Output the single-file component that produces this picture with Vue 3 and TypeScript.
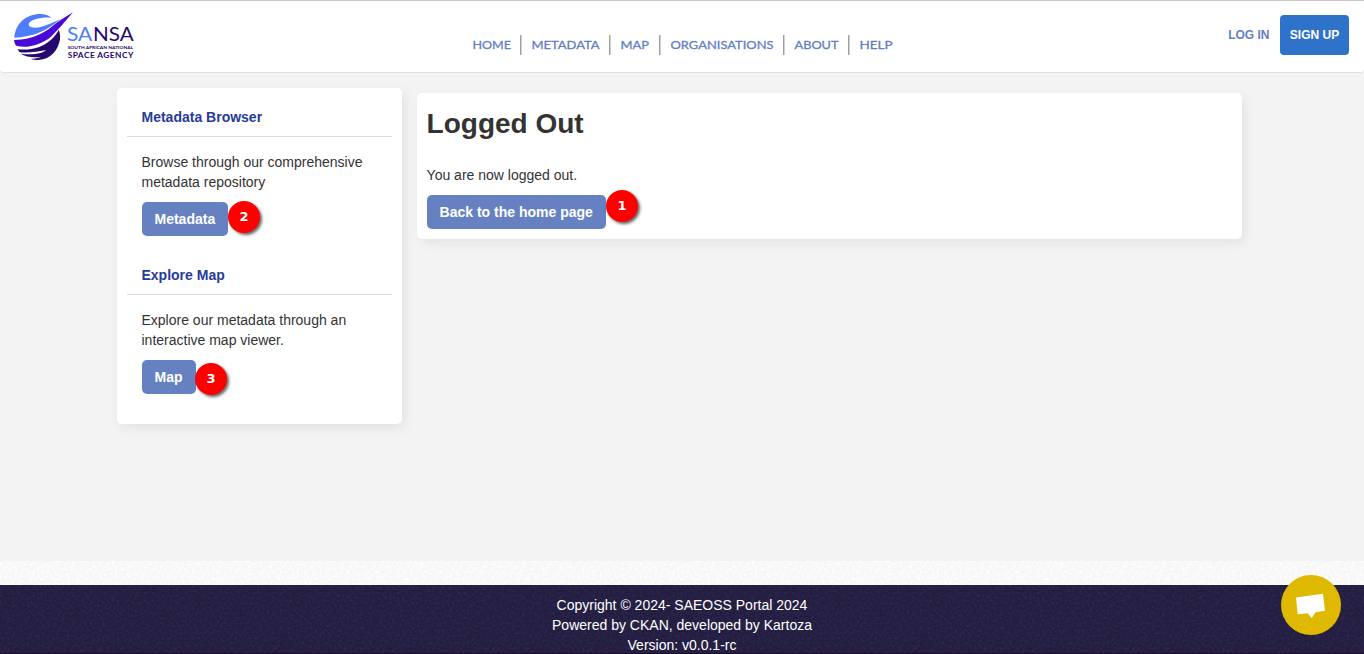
<script setup lang="ts">
interface NavItem { label: string; width: number }
interface Panel { title: string; lines: string[]; button: string; step: number }

const nav: NavItem[] = [
  { label: 'HOME', width: 38.5 },
  { label: 'METADATA', width: 68 },
  { label: 'MAP', width: 28.5 },
  { label: 'ORGANISATIONS', width: 103 },
  { label: 'ABOUT', width: 44 },
  { label: 'HELP', width: 33 },
]

const panels: Panel[] = [
  { title: 'Metadata Browser', lines: ['Browse through our comprehensive', 'metadata repository'], button: 'Metadata', step: 2 },
  { title: 'Explore Map', lines: ['Explore our metadata through an', 'interactive map viewer.'], button: 'Map', step: 3 },
]
</script>

<template>
  <div class="page">
    <header class="header">
      <svg class="logo" width="150" height="70" viewBox="0 0 450 210" aria-label="SANSA">
        <path fill="#4d7dfb" d="M43 110C46 68 78 39 121 39C134 39 146 43 154 50C126 47 92 55 87 67C82 80 103 83 125 77C145 72 166 61 181 54C151 81 112 107 43 110Z" />
        <path fill="#4a0ad6" d="M42 117C103 117 140 91 169 66C182 57 199 47 219 34C198 58 175 87 153 107C126 130 80 144 49 134C44 130 43 123 42 117Z" />
        <path fill="#26066f" d="M176 86C181 98 182 111 178 124C169 157 143 177 114 177C106 177 99 176 92 173C105 173 116 171 122 167C103 171 77 168 62 158C94 163 125 159 138 147C111 153 76 157 58 153L53 145C92 149 129 139 153 116C163 107 171 97 176 86Z" />
        <g font-family="Lato, sans-serif">
          <text x="201" y="120" font-size="56" fill="#4d7dfb" textLength="76" lengthAdjust="spacingAndGlyphs">SA</text>
          <text x="279" y="120" font-size="56" fill="#26066f" textLength="122" lengthAdjust="spacingAndGlyphs">NSA</text>
          <text x="203" y="143" font-size="13" font-weight="700" fill="#26066f" textLength="197" lengthAdjust="spacingAndGlyphs">SOUTH AFRICAN NATIONAL</text>
          <text x="203" y="170" font-size="25" font-weight="700" fill="#26066f" textLength="197" lengthAdjust="spacing">SPACE AGENCY</text>
        </g>
      </svg>
      <nav class="nav">
        <a v-for="item in nav" :key="item.label" class="nav-item">
          <svg :width="item.width" height="20" class="nav-label">
            <text x="0.5" y="14" :textLength="item.width" lengthAdjust="spacingAndGlyphs">{{ item.label }}</text>
          </svg>
        </a>
      </nav>
      <div class="account">
        <a class="login">LOG IN</a>
        <a class="signup">SIGN UP</a>
      </div>
    </header>

    <main class="content">
      <aside class="card sidebar">
        <section v-for="panel in panels" :key="panel.title" class="panel">
          <h2 class="panel-title">{{ panel.title }}</h2>
          <div class="panel-body">
            <p><span v-for="line in panel.lines" :key="line" class="line">{{ line }}</span></p>
            <a class="btn">{{ panel.button }}<span class="step" :class="'step-' + panel.step">{{ panel.step }}</span></a>
          </div>
        </section>
      </aside>
      <section class="card primary">
        <h1>Logged Out</h1>
        <p>You are now logged out.</p>
        <a class="btn">Back to the home page<span class="step step-1">1</span></a>
      </section>
    </main>

    <div class="strip">
      <svg class="grain" width="100%" height="100%">
        <filter id="grain-light" x="0" y="0" width="100%" height="100%">
          <feTurbulence type="fractalNoise" baseFrequency="0.4" numOctaves="2" seed="3" />
          <feColorMatrix values="0 0 0 0 1  0 0 0 0 1  0 0 0 0 1  3 0 0 0 -1.3" />
        </filter>
        <rect width="100%" height="100%" filter="url(#grain-light)" />
      </svg>
    </div>
    <footer class="footer">
      <svg class="grain" width="100%" height="100%">
        <filter id="grain-dark" x="0" y="0" width="100%" height="100%">
          <feTurbulence type="fractalNoise" baseFrequency="0.4" numOctaves="2" seed="7" />
          <feColorMatrix values="0 0 0 0 .35  0 0 0 0 .34  0 0 0 0 .48  .25 0 0 0 -.11" />
        </filter>
        <rect width="100%" height="100%" filter="url(#grain-dark)" />
      </svg>
      <div class="credits">
        <div>Copyright © 2024- SAEOSS Portal 2024</div>
        <div>Powered by CKAN, developed by Kartoza</div>
        <div>Version: v0.0.1-rc</div>
      </div>
    </footer>

    <button class="chat" aria-label="Chat">
      <svg width="60" height="60" viewBox="0 0 60 60">
        <path fill="#fff" d="M15 22.4L42 18.8L44 35.7L34.5 37.3L30.8 43L26.5 38.2L16.6 39.2Z" />
      </svg>
    </button>
  </div>
</template>

<style>
html, body { margin: 0; overflow: hidden; }
</style>

<style scoped>
* { box-sizing: border-box; }
.page {
  position: relative;
  display: flex;
  flex-direction: column;
  height: 654px;
  overflow: hidden;
  background: #f3f3f3;
  color: #333;
  font: 14px/20px "Liberation Sans", Arial, sans-serif;
}
.header {
  display: grid;
  grid-template-columns: 461.5px 1fr auto;
  height: 73px;
  flex: none;
  background: #fff;
  border-top: 1px solid #c8c8c8;
  border-bottom: 1px solid #dcdfe5;
  border-radius: 0 0 4px 4px;
}
.logo { display: block; }
.nav { display: flex; padding-top: 34px; }
.nav-item { display: flex; height: 20px; padding: 0 10px; border-right: 1px solid #a0a0a0; box-shadow: 1px 0 0 #d0d0d0; box-sizing: content-box; }
.nav-item:last-child { border: 0; box-shadow: none; }
.nav-label { display: block; overflow: visible; }
.nav-label text { font: 400 12px Lato, sans-serif; fill: #6480c3; stroke: #6480c3; stroke-width: .3px; }
.account { display: flex; align-items: flex-start; padding: 14px 15px 0 0; font-size: 12px; font-weight: 700; line-height: 40px; }
.login { margin-right: 10.5px; color: #6480c3; }
.signup { width: 69px; height: 40px; border-radius: 4px; background: #2f72ca; color: #fff; text-align: center; }
.content { display: flex; align-items: flex-start; gap: 15px; padding: 15px 0 0 117px; height: 488px; flex: none; }
.card { background: #fff; border-radius: 5px; box-shadow: 3px 4px 12px rgba(0, 0, 0, .07); }
.sidebar { width: 285px; height: 336px; padding: 9px 10px 0; }
.panel { height: 158px; }
.panel-title { height: 40px; margin: 0; padding: 10px 14.5px; border-bottom: 1px solid #ddd; color: #283a9a; font-size: 14px; line-height: 20px; }
.panel-body { padding: 15px 14.5px 0; }
p { margin: 0 0 10px; }
.line { display: block; white-space: nowrap; }
.btn { position: relative; display: inline-block; height: 34px; padding: 7px 13px; border-radius: 5px; background: #6681c2; color: #fff; font-weight: 700; white-space: nowrap; }
.primary { width: 825px; height: 146px; margin-top: 5px; padding: 10px 9.6px; }
h1 { margin: 0 0 21px; font-size: 28px; line-height: 41px; }
.step {
  position: absolute;
  width: 32px;
  height: 32px;
  border-radius: 50%;
  background: #f00;
  box-shadow: 2px 2px 3px rgba(0, 0, 0, .6);
  font: 700 13px/32px "DejaVu Sans", sans-serif;
  text-align: center;
}
.step-1 { left: 179.5px; top: -5.5px; }
.step-2 { left: 86.5px; top: -1.5px; }
.step-3 { left: 53.5px; top: 2.5px; }
.strip { position: relative; height: 24px; flex: none; background: #f7f7f7; }
.grain { position: absolute; inset: 0; display: block; }
.footer { position: relative; height: 69px; flex: none; padding-top: 10px; background: #231e41; color: #fff; text-align: center; border-bottom: 1px solid #1b0c2b; }
.credits { position: relative; }
.chat { position: absolute; left: 1281px; top: 575px; width: 60px; height: 60px; padding: 0; border: 0; border-radius: 50%; background: #dfb900; }
.chat svg { display: block; }
</style>
